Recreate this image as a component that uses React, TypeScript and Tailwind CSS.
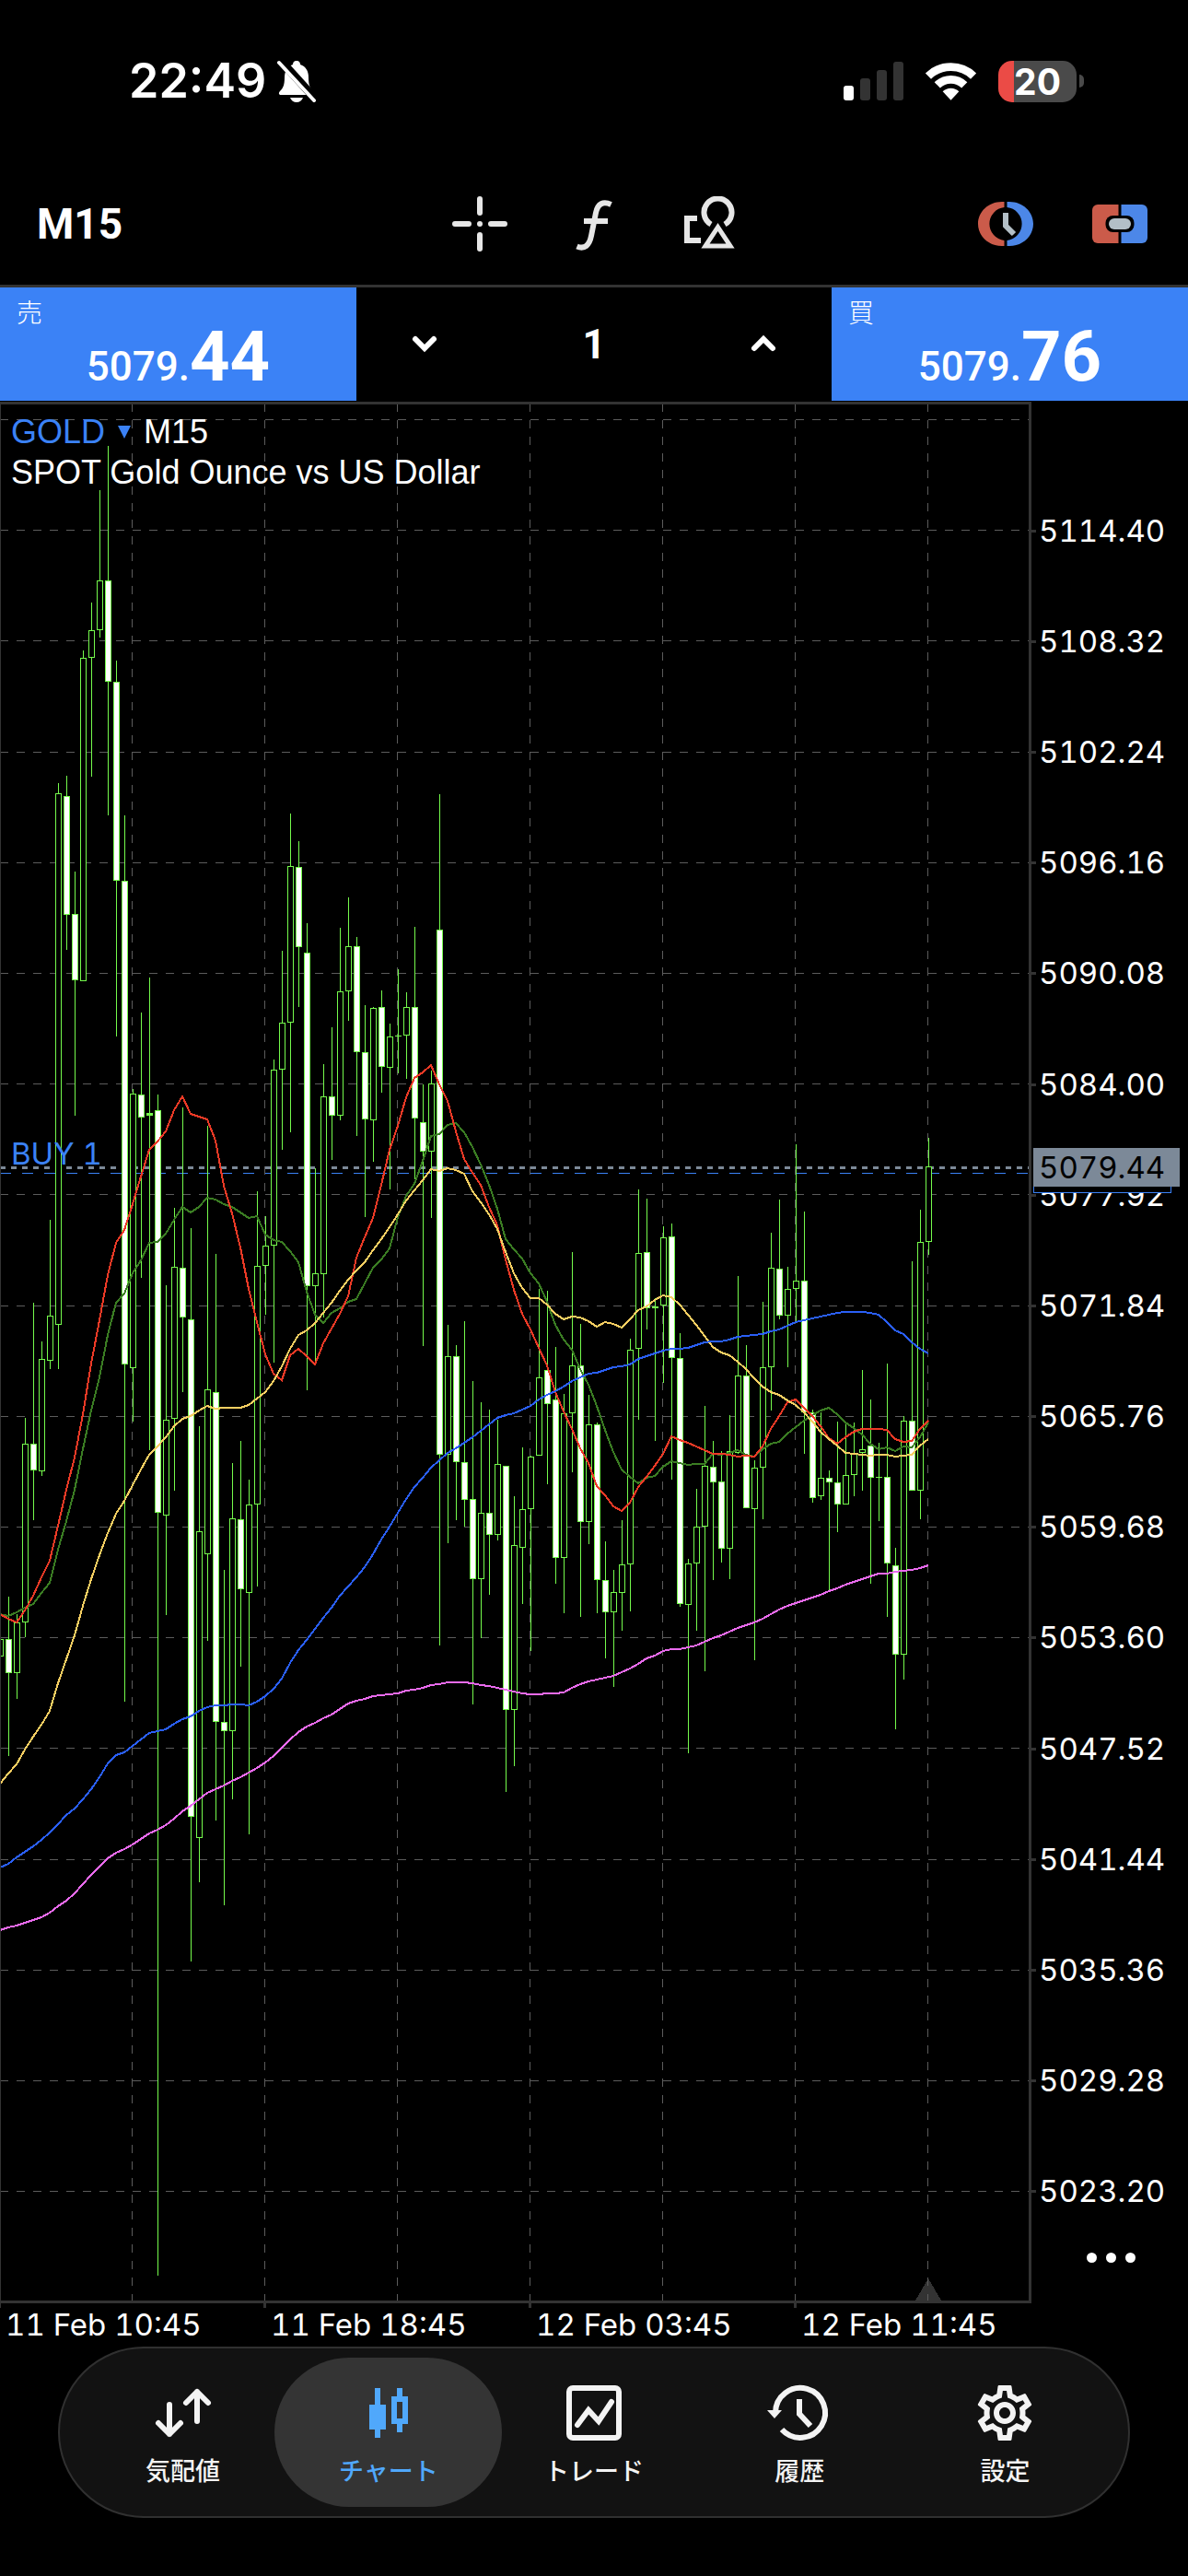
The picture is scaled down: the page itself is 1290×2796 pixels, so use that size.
import React, { useState } from 'react';
import { MdOutlineSettings } from 'react-icons/md';

// [high, bodyTop, bodyBottom, low, filled]
const candles: number[][] = [
  [1779, 1779, 1798, 1798, 0], [1733, 1779, 1816, 1906, 1], [1752, 1761, 1816, 1844, 0], [1539, 1567, 1761, 1777, 0],
  [1414, 1567, 1596, 1650, 1], [1456, 1475, 1597, 1602, 0], [1324, 1428, 1477, 1486, 0], [850, 861, 1438, 1486, 0],
  [842, 864, 993, 1031, 1], [946, 992, 1064, 1211, 1], [706, 714, 1065, 1065, 0], [654, 684, 714, 843, 0],
  [532, 630, 684, 692, 0], [484, 630, 740, 885, 1], [717, 740, 956, 1125, 1], [885, 956, 1481, 1847, 1],
  [1182, 1187, 1485, 1543, 0], [1099, 1188, 1213, 1387, 1], [1061, 1208, 1211, 1574, 0], [1188, 1205, 1642, 2470, 1],
  [1395, 1541, 1645, 1753, 0], [1311, 1375, 1540, 1618, 0], [1202, 1376, 1430, 1511, 1], [1333, 1432, 1972, 2129, 1],
  [1548, 1662, 1995, 2043, 0], [1222, 1508, 1687, 1781, 0], [1361, 1511, 1869, 1976, 1], [1704, 1869, 1879, 2068, 1],
  [1588, 1648, 1879, 1953, 0], [1564, 1649, 1725, 1809, 1], [1606, 1633, 1729, 1991, 0], [1293, 1374, 1633, 1722, 0],
  [1320, 1352, 1374, 1427, 0], [1150, 1161, 1352, 1479, 0], [1032, 1110, 1161, 1248, 0], [883, 940, 1110, 1229, 0],
  [913, 941, 1028, 1093, 1], [1002, 1034, 1396, 1509, 1], [1268, 1382, 1396, 1478, 0], [1155, 1190, 1383, 1430, 0],
  [1115, 1190, 1211, 1259, 1], [1007, 1076, 1211, 1216, 0], [974, 1027, 1076, 1108, 0], [1017, 1027, 1142, 1233, 1],
  [1091, 1142, 1215, 1321, 1], [1093, 1094, 1216, 1261, 0], [1075, 1093, 1158, 1186, 1], [1111, 1125, 1159, 1291, 0],
  [1052, 1124, 1125, 1165, 0], [1077, 1093, 1124, 1171, 0], [1006, 1093, 1214, 1280, 1], [1177, 1218, 1250, 1461, 1],
  [1162, 1176, 1250, 1322, 0], [862, 1009, 1579, 1786, 1], [1438, 1472, 1579, 1675, 0], [1460, 1472, 1587, 1650, 1],
  [1434, 1587, 1628, 1657, 1], [1499, 1627, 1714, 1850, 1], [1522, 1642, 1714, 1778, 0], [1530, 1642, 1666, 1731, 1],
  [1541, 1589, 1666, 1672, 0], [1591, 1591, 1856, 1945, 1], [1624, 1677, 1856, 1917, 0], [1571, 1638, 1680, 1741, 0],
  [1580, 1581, 1638, 1792, 0], [1399, 1495, 1580, 1580, 0], [1401, 1487, 1524, 1611, 1], [1462, 1519, 1691, 1719, 1],
  [1513, 1534, 1691, 1751, 0], [1359, 1482, 1534, 1598, 0], [1437, 1482, 1652, 1755, 1], [1514, 1546, 1652, 1676, 0],
  [1544, 1546, 1715, 1751, 1], [1673, 1715, 1750, 1800, 1], [1704, 1728, 1750, 1831, 0], [1650, 1698, 1729, 1770, 0],
  [1453, 1465, 1698, 1749, 0], [1291, 1360, 1464, 1541, 0], [1301, 1359, 1420, 1443, 1], [1409, 1418, 1420, 1564, 0],
  [1331, 1343, 1417, 1501, 0], [1328, 1342, 1474, 1606, 1], [1447, 1474, 1741, 1744, 1], [1692, 1697, 1742, 1903, 0],
  [1616, 1657, 1697, 1770, 0], [1526, 1591, 1657, 1814, 0], [1564, 1592, 1609, 1715, 1], [1575, 1608, 1681, 1696, 1],
  [1536, 1575, 1681, 1714, 0], [1385, 1493, 1577, 1578, 0], [1460, 1493, 1637, 1637, 1], [1585, 1593, 1638, 1802, 0],
  [1413, 1484, 1593, 1649, 0], [1338, 1376, 1484, 1531, 0], [1302, 1377, 1428, 1432, 1], [1375, 1399, 1428, 1484, 0],
  [1242, 1390, 1399, 1434, 0], [1315, 1390, 1533, 1578, 1], [1530, 1533, 1626, 1631, 1], [1533, 1604, 1624, 1628, 0],
  [1596, 1604, 1609, 1728, 1], [1543, 1609, 1633, 1663, 1], [1544, 1601, 1633, 1633, 0], [1544, 1578, 1601, 1624, 0],
  [1487, 1573, 1577, 1618, 0], [1519, 1569, 1604, 1719, 1], [1566, 1603, 1604, 1651, 0], [1480, 1603, 1697, 1755, 1],
  [1680, 1699, 1796, 1877, 1], [1537, 1542, 1796, 1823, 0], [1369, 1542, 1618, 1618, 1], [1313, 1348, 1618, 1649, 0],
  [1235, 1266, 1348, 1362, 0],
];

const averages = [
  {
    color: '#3b7d23',
    ys: [1752, 1754, 1750, 1745, 1741, 1729, 1718, 1682, 1651, 1617, 1573, 1531, 1495, 1449, 1414, 1404, 1382, 1368, 1349, 1348, 1339, 1324, 1310, 1316, 1310, 1300, 1302, 1307, 1310, 1316, 1322, 1320, 1340, 1346, 1348, 1358, 1370, 1402, 1427, 1436, 1425, 1420, 1413, 1410, 1393, 1376, 1367, 1355, 1321, 1298, 1285, 1260, 1233, 1231, 1221, 1219, 1229, 1245, 1264, 1286, 1312, 1345, 1356, 1366, 1382, 1393, 1413, 1438, 1454, 1465, 1486, 1503, 1526, 1552, 1576, 1595, 1603, 1610, 1604, 1602, 1592, 1586, 1588, 1590, 1589, 1589, 1578, 1579, 1577, 1574, 1579, 1581, 1573, 1567, 1565, 1556, 1549, 1542, 1536, 1531, 1528, 1535, 1544, 1550, 1557, 1567, 1573, 1571, 1575, 1570, 1571, 1560, 1544],
  },
  {
    color: '#ed3a26',
    ys: [1752, 1757, 1761, 1748, 1732, 1712, 1694, 1656, 1617, 1582, 1535, 1480, 1433, 1384, 1349, 1335, 1307, 1277, 1248, 1239, 1228, 1205, 1190, 1209, 1212, 1215, 1238, 1287, 1317, 1354, 1399, 1435, 1470, 1491, 1498, 1471, 1464, 1472, 1481, 1458, 1442, 1426, 1407, 1365, 1343, 1322, 1286, 1248, 1222, 1191, 1170, 1164, 1156, 1177, 1195, 1228, 1258, 1273, 1286, 1310, 1330, 1367, 1400, 1426, 1443, 1463, 1482, 1511, 1532, 1551, 1572, 1588, 1613, 1623, 1635, 1640, 1631, 1614, 1603, 1591, 1578, 1559, 1563, 1566, 1570, 1574, 1578, 1578, 1579, 1581, 1580, 1581, 1570, 1551, 1537, 1522, 1519, 1528, 1537, 1548, 1561, 1567, 1560, 1554, 1551, 1551, 1551, 1552, 1562, 1565, 1564, 1551, 1542],
  },
  {
    color: '#f6cf62',
    ys: [1936, 1925, 1915, 1899, 1885, 1872, 1857, 1827, 1801, 1775, 1743, 1714, 1688, 1664, 1643, 1629, 1612, 1595, 1579, 1570, 1560, 1548, 1540, 1537, 1531, 1526, 1529, 1528, 1528, 1528, 1525, 1518, 1511, 1499, 1483, 1464, 1449, 1444, 1436, 1425, 1414, 1401, 1389, 1379, 1370, 1357, 1345, 1332, 1318, 1303, 1292, 1281, 1269, 1271, 1268, 1270, 1274, 1293, 1305, 1318, 1334, 1359, 1382, 1398, 1409, 1409, 1416, 1426, 1432, 1429, 1430, 1434, 1440, 1435, 1437, 1441, 1432, 1422, 1418, 1411, 1406, 1408, 1416, 1427, 1438, 1450, 1462, 1468, 1471, 1478, 1486, 1496, 1505, 1511, 1514, 1520, 1525, 1533, 1543, 1554, 1562, 1569, 1577, 1578, 1579, 1580, 1579, 1579, 1581, 1580, 1579, 1569, 1562],
  },
  {
    color: '#2a5ff6',
    ys: [2027, 2023, 2016, 2010, 2004, 1997, 1989, 1980, 1970, 1963, 1953, 1942, 1929, 1914, 1905, 1902, 1895, 1888, 1881, 1879, 1877, 1871, 1866, 1863, 1857, 1853, 1851, 1851, 1850, 1850, 1851, 1847, 1841, 1833, 1822, 1805, 1791, 1780, 1768, 1756, 1745, 1732, 1722, 1712, 1701, 1687, 1671, 1657, 1642, 1627, 1614, 1604, 1593, 1585, 1577, 1572, 1566, 1560, 1553, 1546, 1539, 1536, 1534, 1530, 1526, 1519, 1514, 1510, 1505, 1499, 1495, 1491, 1490, 1487, 1484, 1483, 1481, 1475, 1472, 1469, 1466, 1464, 1464, 1463, 1460, 1457, 1456, 1456, 1454, 1451, 1450, 1449, 1448, 1445, 1443, 1439, 1435, 1433, 1431, 1429, 1427, 1425, 1424, 1424, 1424, 1425, 1427, 1435, 1444, 1448, 1457, 1464, 1469],
  },
  {
    color: '#ea6bee',
    ys: [2095, 2092, 2090, 2087, 2084, 2081, 2076, 2069, 2063, 2055, 2045, 2035, 2026, 2017, 2011, 2007, 2002, 1996, 1990, 1986, 1981, 1974, 1966, 1960, 1953, 1946, 1942, 1938, 1933, 1929, 1924, 1919, 1913, 1906, 1897, 1888, 1880, 1874, 1870, 1865, 1861, 1855, 1849, 1846, 1844, 1841, 1840, 1839, 1838, 1835, 1834, 1832, 1829, 1828, 1826, 1826, 1826, 1827, 1829, 1830, 1832, 1834, 1836, 1838, 1839, 1839, 1838, 1838, 1837, 1832, 1828, 1825, 1823, 1821, 1819, 1815, 1811, 1806, 1800, 1797, 1792, 1790, 1790, 1788, 1786, 1782, 1778, 1775, 1771, 1767, 1764, 1761, 1757, 1752, 1747, 1743, 1740, 1737, 1734, 1731, 1727, 1724, 1720, 1717, 1714, 1711, 1708, 1708, 1706, 1705, 1704, 1702, 1699],
  },
];

const prices = ['5114.40', '5108.32', '5102.24', '5096.16', '5090.08', '5084.00', '5077.92', '5071.84', '5065.76', '5059.68', '5053.60', '5047.52', '5041.44', '5035.36', '5029.28', '5023.20'];
const dates = ['11 Feb 10:45', '11 Feb 18:45', '12 Feb 03:45', '12 Feb 11:45'];

const gridYs = Array.from({ length: 17 }, (_, k) => Math.round(455 + k * 120.2));
const gridXs = [143, 287, 431, 575, 719, 863, 1007];

const StatusBar = () => (
  <div className="flex h-44 items-center justify-between pl-[140px] pr-[113px] font-['Inter',sans-serif]">
    <div className="flex items-center gap-3">
      <span className="text-[52px] font-semibold leading-none">22:49</span>
      <svg width="42" height="46" viewBox="0 0 42 46" fill="#fff">
        <path d="M21 1c3 0 4 2 4 4 6 2 9 7 9 14 0 9 2 12 5 15 2 2 1 4-1 4H4c-2 0-3-2-1-4 3-3 5-6 5-15C8 12 11 7 17 5c0-2 1-4 4-4z" />
        <path d="M14 41h14c-1 3-4 5-7 5s-6-2-7-5z" />
        <path d="M4 1l38 42" stroke="#000" strokeWidth="9" />
        <path d="M2 3l38 41" stroke="#fff" strokeWidth="4" strokeLinecap="round" />
      </svg>
    </div>
    <div className="flex items-center gap-[23px]">
      <svg width="65" height="42" viewBox="0 0 65 42" fill="#333">
        <rect x="0" y="26" width="11" height="16" rx="3" fill="#fff" />
        <rect x="18" y="18" width="11" height="24" rx="3" />
        <rect x="36" y="9" width="11" height="33" rx="3" />
        <rect x="54" y="0" width="11" height="42" rx="3" />
      </svg>
      <svg width="57" height="42" viewBox="0 0 58 42" fill="none" stroke="#fff" strokeWidth="9">
        <path d="M4 15.500a36 36 0 0 1 50 0" />
        <path d="M14 25.500a21.500 21.500 0 0 1 30 0" />
        <path d="M29 42l-9-9.500a13 13 0 0 1 18 0z" fill="#fff" stroke="none" />
      </svg>
      <div className="flex items-center gap-[3px]">
        <div className="flex h-[45px] w-[85px] items-center justify-center rounded-[15px] bg-[linear-gradient(90deg,#eb4b46_17px,#4a4a4a_17px)] text-[39px] font-bold leading-none">20</div>
        <div className="h-[14px] w-[5px] rounded-r-full bg-[#4a4a4a]" />
      </div>
    </div>
  </div>
);

const Toolbar = () => (
  <div className="grid h-[133px] grid-cols-3 items-center px-11">
    <button className="-ml-1 justify-self-start font-['Roboto',sans-serif] text-[46px] font-bold leading-none">M15</button>
    <div className="flex justify-center gap-16">
      <button aria-label="Crosshair">
        <svg width="60" height="60" viewBox="0 0 60 60" stroke="#e6e6e6" strokeWidth="6" strokeLinecap="round">
          <path d="M30 3v15M30 42v15M3 30h15M42 30h15M30 30h.01" />
        </svg>
      </button>
      <button aria-label="Indicators">
        <svg width="60" height="60" viewBox="0 0 60 60" fill="none" stroke="#e6e6e6" strokeWidth="6">
          <path d="M11.500 54.500C20 58 25 53 27 43l5-25C34 8 40 5 48.500 9" />
          <path d="M19 27h26" />
        </svg>
      </button>
      <button aria-label="Objects">
        <svg width="60" height="60" viewBox="0 0 60 60" fill="none" stroke="#e6e6e6" strokeWidth="6">
          <path d="M33 30.500a15 15 0 1 1 15 0" />
          <path d="M18 24H7v24h15" />
          <path d="M40.500 33.500L27 54h27z" strokeWidth="5" />
        </svg>
      </button>
    </div>
    <div className="flex justify-end gap-16">
      <button aria-label="Sessions">
        <svg width="60" height="60" viewBox="0 0 60 60">
          <path d="M28.500 6H26C11 6 0 17 0 30s11 24 26 24h2.500v-6.100a18 18 0 0 1 0-35.800z" fill="#cb5b4a" />
          <path d="M31.500 6H34c15 0 26 11 26 24S49 54 34 54h-2.500v-6.100a18 18 0 0 0 0-35.800z" fill="#4c87e8" />
          <path d="M30 18v14l9 9" fill="none" stroke="#b3bfc7" strokeWidth="6" />
        </svg>
      </button>
      <button aria-label="One click trading">
        <svg width="60" height="60" viewBox="0 0 60 60">
          <path d="M28.500 9H6a6 6 0 0 0-6 6v30a6 6 0 0 0 6 6h22.500z" fill="#cb5b4a" />
          <path d="M31.500 9H54a6 6 0 0 1 6 6v30a6 6 0 0 1-6 6H31.500z" fill="#4c87e8" />
          <rect x="14.500" y="21" width="31" height="18" rx="8" fill="#000" />
          <rect x="18" y="24" width="24" height="12" rx="6" fill="#b3bfc7" />
        </svg>
      </button>
    </div>
  </div>
);

const PriceButton = ({ label, whole, cents }: { label: string; whole: string; cents: string }) => (
  <button className="flex flex-col bg-[#3b82f6] pt-3">
    <span className="pl-[18px] text-left font-['Noto_Sans_CJK_JP',sans-serif] text-[28px] font-light leading-[28px]">{label}</span>
    <span className="flex items-baseline justify-center font-['Roboto',sans-serif] leading-[70px]">
      <span className="text-[44px] font-medium">{whole}</span>
      <span className="text-[76px] font-bold">{cents}</span>
    </span>
  </button>
);

const TradePanel = () => {
  const [volume, setVolume] = useState('1');
  const step = (d: number) => setVolume(String(Math.max(1, Number(volume) + d)));

  return (
    <div className="mb-px grid h-[126px] grid-cols-[3fr_4fr_3fr] grid-rows-[123px] border-t-[3px] border-[#333]">
      <PriceButton label="売" whole="5079." cents="44" />
      <div className="flex items-center justify-between px-14">
        <button aria-label="Decrease volume" onClick={() => step(-1)}>
          <svg width="36" height="36" viewBox="0 0 36 36" fill="none" stroke="#fff" strokeWidth="6" strokeLinecap="round">
            <path d="M8 12l10 10 10-10" />
          </svg>
        </button>
        <input aria-label="Volume" value={volume} onChange={(e) => setVolume(e.target.value)}
          className="w-40 bg-transparent text-center font-['Roboto',sans-serif] text-[44px] font-bold leading-none outline-none" />
        <button aria-label="Increase volume" onClick={() => step(1)}>
          <svg width="36" height="36" viewBox="0 0 36 36" fill="none" stroke="#fff" strokeWidth="6" strokeLinecap="round">
            <path d="M8 22l10-10 10 10" />
          </svg>
        </button>
      </div>
      <PriceButton label="買" whole="5079." cents="76" />
    </div>
  );
};

const Chart = () => (
  <div className="relative min-w-0 flex-1">
    <svg className="block h-[2069px] w-full" viewBox="0 436 1120 2069" preserveAspectRatio="none" shapeRendering="crispEdges">
      <path d="M994 2497l14-24 14 24z" fill="#333" />
      <g stroke="#5c5c5c" strokeWidth="1" strokeDasharray="9 9">
        {gridYs.map((y) => <line key={y} x1="0" x2="1117" y1={y + 0.5} y2={y + 0.5} />)}
        {gridXs.map((x) => <line key={x} x1={x + 0.5} x2={x + 0.5} y1="438" y2="2497" />)}
      </g>
      <line x1="0" x2="1117" y1="1267.5" y2="1267.5" stroke="#7c8998" strokeWidth="3" strokeDasharray="6 6" />
      <line x1="0" x2="1117" y1="1273.5" y2="1273.5" stroke="#3b82f6" strokeDasharray="12 12" />
      {candles.map(([high, top, bottom, low, filled], i) => (
        <g key={i}>
          <rect x={i * 9} y={high} width="1" height={low - high} fill="#75fb4c" />
          <rect x={i * 9 - 3} y={top} width="7" height={bottom - top} fill="#75fb4c" />
          {bottom - top > 3 && (
            <rect x={i * 9 - 2} y={top + 1} width="5" height={bottom - top - 2} fill={filled ? '#fff' : '#000'} />
          )}
        </g>
      ))}
      {averages.map(({ color, ys }) => (
        <polyline key={color} points={ys.map((y, i) => `${i * 9},${y}`).join(' ')} fill="none" stroke={color} strokeWidth="2" />
      ))}
      {/* frame */}
      <g fill="#333">
        <rect x="0" y="436" width="1120" height="3" />
        <rect x="0" y="2497" width="1120" height="3" />
        <rect x="0" y="436" width="1" height="2069" />
        <rect x="1117" y="436" width="3" height="2064" />
        {[286, 574, 862].map((x) => <rect key={x} x={x} y="2500" width="3" height="5" />)}
      </g>
    </svg>
    <div className="absolute left-3 top-[11px] font-['Liberation_Sans',sans-serif] text-[36px] leading-[44px]">
      <div className="flex items-center">
        <button className="flex items-center gap-3.5 text-[#3b82f6]">
          GOLD
          <svg width="14" height="14" viewBox="0 0 14 14" fill="#3b82f6"><path d="M0 0h14L7 14z" /></svg>
        </button>
        <span className="ml-3.5">M15</span>
      </div>
      <div>SPOT Gold Ounce vs US Dollar</div>
    </div>
    <div className="absolute left-3 top-[796px] font-['Inter',sans-serif] text-[33px] leading-10 tabular-nums text-[#3b82f6]">BUY 1</div>
  </div>
);

const PriceAxis = () => (
  <div className="relative flex w-[170px] flex-col pt-20 font-['Inter',sans-serif] text-[33px] leading-none tabular-nums">
    <div className="flex h-[1923px] flex-col">
      {prices.map((p) => (
        <div key={p} className="flex flex-1 items-center gap-[3px]">
          <span className="h-[3px] w-[5px] bg-[#333]" />
          {p}
        </div>
      ))}
    </div>
    <div className="absolute left-0.5 top-[820px] h-[39px] w-[150px] border border-[#3b82f6] bg-black" />
    <div className="absolute left-0.5 top-[810px] flex h-[42px] w-[159px] items-center bg-[#7c8998] pl-1.5 text-black">5079.44</div>
    <button aria-label="More" className="ml-[60px] mt-1.5 flex gap-2.5">
      <span className="size-[11px] rounded-full bg-white" />
      <span className="size-[11px] rounded-full bg-white" />
      <span className="size-[11px] rounded-full bg-white" />
    </button>
  </div>
);

const tabs = [
  {
    label: '気配値',
    icon: (
      <g fill="none" stroke="currentColor" strokeWidth="6" strokeLinecap="round" strokeLinejoin="round">
        <path d="M15 21v32M3 41l12 12 12-12" />
        <path d="M45 39V7M33 19L45 7l12 12" />
      </g>
    ),
  },
  {
    label: 'チャート',
    icon: (
      <g fill="currentColor">
        <path d="M15 3h6v18h6v27h-6v9h-6v-9H9V21h6z" />
        <path d="M39 3h6v9h6v30h-6v9h-6v-9h-6V12h6zM39 18v18h6V18z" fillRule="evenodd" />
      </g>
    ),
  },
  {
    label: 'トレード',
    icon: (
      <g fill="none" stroke="currentColor" strokeLinejoin="round" strokeLinecap="round">
        <rect x="3" y="3" width="54" height="54" rx="4" strokeWidth="6" />
        <path d="M12 43l12-16 11 12 14-21" strokeWidth="6" strokeLinejoin="miter" />
      </g>
    ),
  },
  {
    label: '履歴',
    icon: (
      <g fill="none" stroke="currentColor" strokeWidth="6">
        <path d="M4 30a27 27 0 1 1 7 18" />
        <path d="M-5 27h16l-8 9z" fill="currentColor" stroke="none" />
        <path d="M30 15v16l12 13" />
      </g>
    ),
  },
  { label: '設定', icon: null },
];

const TabBar = () => {
  const [active, setActive] = useState(1);

  return (
    <nav className="mx-[63px] mb-[63px] grid h-[186px] grid-cols-5 rounded-full border-2 border-[#303030] bg-[#121212] px-[22px] py-2.5 font-['Noto_Sans_CJK_JP',sans-serif]">
      {tabs.map((t, i) => (
        <button key={t.label} onClick={() => setActive(i)}
          className={i === active
            ? '-mx-3 flex flex-col items-center rounded-full bg-[#343434] pt-[30px] text-[#50a8fb]'
            : 'flex flex-col items-center pt-[30px] text-[#f3f3f3]'}>
          <div className="flex size-[60px] items-center justify-center">
            {t.icon
              ? <svg width="60" height="60" viewBox="0 0 60 60" overflow="visible">{t.icon}</svg>
              : <MdOutlineSettings className="size-[72px] shrink-0" />}
          </div>
          <span className="mt-3.5 text-[27px] font-medium leading-9">{t.label}</span>
        </button>
      ))}
    </nav>
  );
};

export default function App() {
  return (
    <div className="flex min-h-screen flex-col bg-black text-white">
      <StatusBar />
      <Toolbar />
      <TradePanel />
      <div className="flex">
        <Chart />
        <PriceAxis />
      </div>
      <div className="flex h-[42px] font-['Inter',sans-serif] text-[33px] leading-[36px] tabular-nums">
        {dates.map((d) => <span key={d} className="w-72 shrink-0 pl-1.5">{d}</span>)}
      </div>
      <TabBar />
    </div>
  );
}
